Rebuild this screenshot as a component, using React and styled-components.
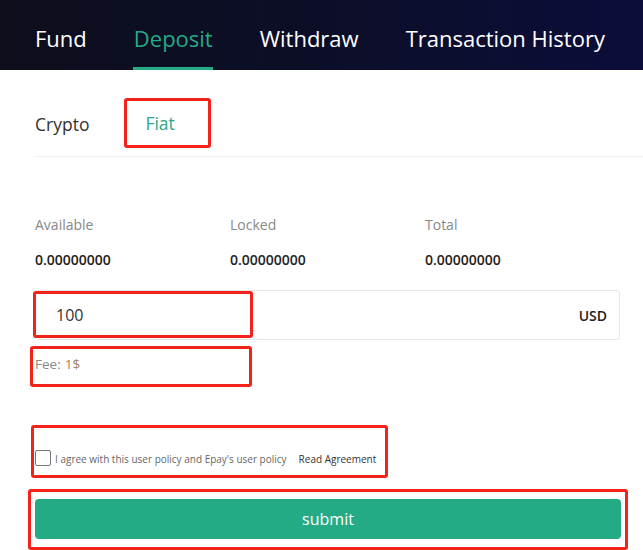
import React from "react";
import styled, { createGlobalStyle } from "styled-components";

const Global = createGlobalStyle`
  html, body { margin: 0; padding: 0; background: #fff; }
  body { font-family: "Open Sans", "Noto Sans", sans-serif; width: 643px; height: 550px; overflow: hidden; }
  * { box-sizing: border-box; }
`;

const Header = styled.div`
  height: 70px;
  background: linear-gradient(90deg, #0d0e1c 0%, #0c0e2a 55%, #0c0d3a 100%);
  display: flex;
  align-items: stretch;
  padding-left: 35px;
  gap: 47px;
`;

const HeadTab = styled.div`
  position: relative;
  display: flex;
  align-items: center;
  padding-top: 5px;
  font-size: 22px;
  color: ${(p) => (p.$active ? "#25ab85" : "#ffffff")};
  white-space: nowrap;
  &::after {
    content: "";
    display: ${(p) => (p.$active ? "block" : "none")};
    position: absolute;
    left: -1px;
    right: 0;
    bottom: 0;
    height: 3px;
    background: #25ab85;
  }
`;

const Body = styled.div`
  padding-left: 35px;
`;

const SubTabs = styled.div`
  display: flex;
  align-items: flex-end;
  height: 87px;
  border-bottom: 1px solid #efefef;
  padding-bottom: 8px;
`;

const SubTab = styled.div`
  font-size: 17.5px;
  color: ${(p) => (p.$active ? "#2aa68a" : "#333")};
  margin-right: ${(p) => (p.$mr || 0)}px;
  margin-bottom: ${(p) => (p.$mb || 0)}px;
`;

const RedBox = styled.div`
  border: 3px solid #f5221b;
  border-radius: 3px;
`;

const FiatBox = styled(RedBox)`
  width: 87px;
  height: 50px;
  display: flex;
  align-items: center;
  padding-left: 18px;
`;

const Stats = styled.div`
  display: grid;
  grid-template-columns: 195px 195px 195px;
  margin-top: 58px;
  row-gap: 15px;
`;

const Label = styled.div`
  font-size: 14px;
  color: #888;
  line-height: 20px;
`;

const Value = styled.div`
  font-size: 14px;
  font-weight: 600;
  color: #222;
  line-height: 20px;
`;

const InputWrap = styled.div`
  position: relative;
  margin-top: 20px;
  width: 585px;
  height: 50px;
  border: 1px solid #e6e6e6;
  border-radius: 3px;
  display: flex;
  align-items: center;
  justify-content: space-between;
  padding: 0 12px 0 20px;
`;

const Amount = styled.span`
  font-size: 16px;
  color: #333;
`;

const Unit = styled.span`
  font-size: 14px;
  font-weight: 600;
  color: #222;
`;

const InputMark = styled(RedBox)`
  position: absolute;
  left: -3px;
  top: 0px;
  width: 220px;
  height: 47px;
`;

const FeeBox = styled(RedBox)`
  margin-top: 6px;
  margin-left: -5px;
  width: 222px;
  height: 41px;
  display: flex;
  align-items: center;
  padding: 0 0 5px 2px;
  font-size: 13.5px;
  color: #888;
`;

const FeeVal = styled.span`
  color: #a0805f;
  margin-left: 4px;
`;

const AgreeBox = styled(RedBox)`
  margin-top: 38px;
  margin-left: -4px;
  width: 357px;
  height: 53px;
  display: flex;
  align-items: flex-end;
  padding: 0 0 9px 1px;
  font-size: 10px;
`;

const Check = styled.span`
  width: 16px;
  height: 16px;
  border: 1px solid #777;
  border-radius: 2px;
  margin-right: 4px;
  flex: none;
`;

const AgreeText = styled.span`
  color: #666;
  margin-right: 12px;
  line-height: 14px;
`;

const ReadLink = styled.span`
  color: #333;
  line-height: 14px;
`;

const SubmitWrap = styled(RedBox)`
  margin-top: 11px;
  margin-left: -7px;
  width: 600px;
  height: 61px;
  padding: 7px 4px 0 4px;
`;

const Submit = styled.div`
  height: 40px;
  background: #24ab85;
  border-radius: 4px;
  color: #fff;
  font-size: 16px;
  display: flex;
  align-items: center;
  justify-content: center;
`;

export default function App() {
  return (
    <>
      <Global />
      <Header>
        <HeadTab>Fund</HeadTab>
        <HeadTab $active>Deposit</HeadTab>
        <HeadTab>Withdraw</HeadTab>
        <HeadTab>Transaction History</HeadTab>
      </Header>
      <Body>
        <SubTabs>
          <SubTab $mr={35} $mb={12}>Crypto</SubTab>
          <FiatBox>
            <SubTab $active>Fiat</SubTab>
          </FiatBox>
        </SubTabs>
        <Stats>
          <Label>Available</Label>
          <Label>Locked</Label>
          <Label>Total</Label>
          <Value>0.00000000</Value>
          <Value>0.00000000</Value>
          <Value>0.00000000</Value>
        </Stats>
        <InputWrap>
          <InputMark />
          <Amount>100</Amount>
          <Unit>USD</Unit>
        </InputWrap>
        <FeeBox>
          Fee:<FeeVal>1$</FeeVal>
        </FeeBox>
        <AgreeBox>
          <Check />
          <AgreeText>I agree with this user policy and Epay's user policy</AgreeText>
          <ReadLink>Read Agreement</ReadLink>
        </AgreeBox>
        <SubmitWrap>
          <Submit>submit</Submit>
        </SubmitWrap>
      </Body>
    </>
  );
}
